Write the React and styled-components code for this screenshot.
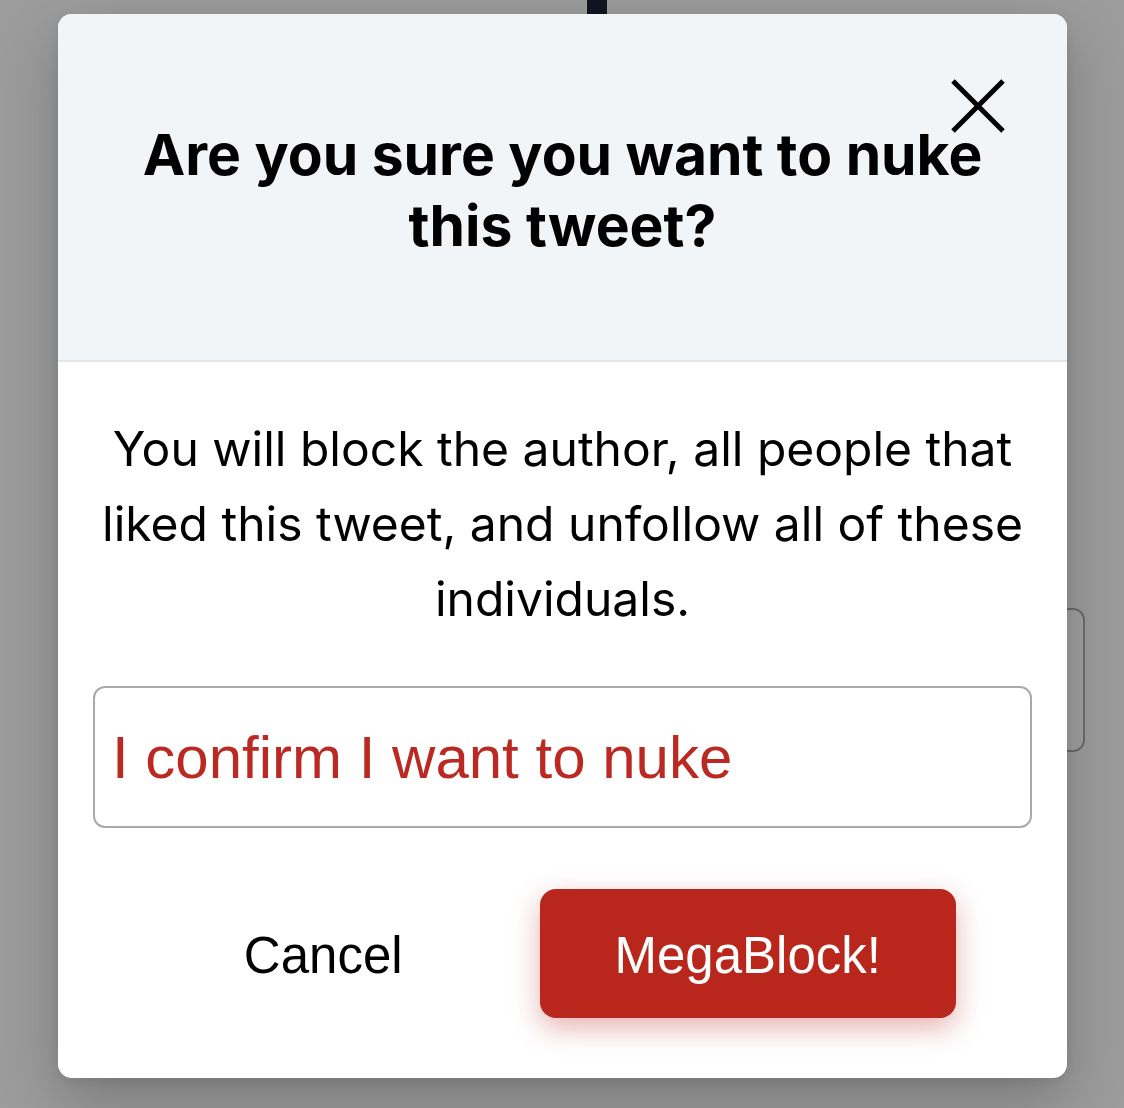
import React from "react";
import styled, { createGlobalStyle } from "styled-components";

const Global = createGlobalStyle`
  html, body { margin: 0; padding: 0; background: #9c9c9d; }
  body { font-family: Inter, "Noto Sans", sans-serif; overflow: hidden; }
  * { box-sizing: border-box; }
`;

const Page = styled.div`
  width: 1124px;
  height: 1108px;
  display: flex;
  flex-direction: column;
  background: #9c9c9d;
`;

const TopBar = styled.div`
  width: 20px;
  height: 20px;
  margin-left: 587px;
  background: #0f1620;
`;

const SideCard = styled.div`
  width: 220px;
  height: 144px;
  margin-top: 588px;
  margin-left: 865px;
  border: 2px solid #6c6c6e;
  border-radius: 12px;
  background: #a0a0a1;
`;

const Overlay = styled.div`
  position: fixed;
  inset: 0;
  display: flex;
  align-items: flex-start;
  padding: 14px 0 0 58px;
`;

const Modal = styled.div`
  position: relative;
  width: 1009px;
  background: #ffffff;
  border-radius: 14px;
  overflow: hidden;
  box-shadow: 0 24px 60px rgba(0, 0, 0, 0.22), 0 4px 14px rgba(0, 0, 0, 0.08);
`;

const Header = styled.div`
  background: #f2f5f8;
  border-bottom: 2px solid #e3e5e9;
  height: 348px;
  padding: 105px 40px 0;
  display: flex;
  justify-content: center;
`;

const Title = styled.h2`
  margin: 0;
  font-family: Inter, "Noto Sans", sans-serif;
  font-weight: 700;
  font-size: 57px;
  line-height: 71px;
  color: #000;
  text-align: center;
`;

const CloseButton = styled.button`
  position: absolute;
  top: 64px;
  right: 61px;
  width: 56px;
  height: 56px;
  padding: 0;
  border: none;
  background: transparent;
  display: flex;
  align-items: center;
  justify-content: center;
  cursor: pointer;
`;

const Body = styled.div`
  padding: 49px 35px 60px;
  display: flex;
  flex-direction: column;
`;

const Message = styled.p`
  margin: 0 0 50px;
  font-family: Inter, "Noto Sans", sans-serif;
  font-weight: 400;
  font-size: 48px;
  line-height: 75px;
  color: #000;
  text-align: center;
`;

const ConfirmInput = styled.input`
  width: 100%;
  height: 142px;
  border: 2px solid #a9a9a9;
  border-radius: 12px;
  padding: 0 17px;
  font-family: "Liberation Sans", Arial, sans-serif;
  font-size: 60px;
  color: #bb2a22;
  background: #fff;
  outline: none;
`;

const Actions = styled.div`
  margin-top: 61px;
  display: flex;
  gap: 8px;
  padding: 0 76px 0 22px;
`;

const ActionButton = styled.button`
  flex: 1;
  height: 129px;
  border: none;
  border-radius: 16px;
  padding-top: 4px;
  font-family: "Liberation Sans", Arial, sans-serif;
  font-size: 51px;
  cursor: pointer;
  color: ${(p) => (p.$danger ? "#ffffff" : "#000000")};
  background: ${(p) => (p.$danger ? "#b9261c" : "transparent")};
  box-shadow: ${(p) => (p.$danger ? "0 10px 28px rgba(185, 38, 28, 0.35)" : "none")};
`;

export default function App() {
  return (
    <>
      <Global />
      <Page>
        <TopBar />
        <SideCard />
      </Page>
      <Overlay>
        <Modal>
          <Header>
            <Title>
              Are you sure you want to nuke
              <br />
              this tweet?
            </Title>
          </Header>
          <CloseButton aria-label="Close">
            <svg width="54" height="54" viewBox="0 0 54 54">
              <path d="M2 2 L52 52 M52 2 L2 52" stroke="#000" strokeWidth="5" strokeLinecap="butt" />
            </svg>
          </CloseButton>
          <Body>
            <Message>
              You will block the author, all people that liked this tweet, and unfollow all of these
              individuals.
            </Message>
            <ConfirmInput defaultValue="I confirm I want to nuke" />
            <Actions>
              <ActionButton>Cancel</ActionButton>
              <ActionButton $danger>MegaBlock!</ActionButton>
            </Actions>
          </Body>
        </Modal>
      </Overlay>
    </>
  );
}
